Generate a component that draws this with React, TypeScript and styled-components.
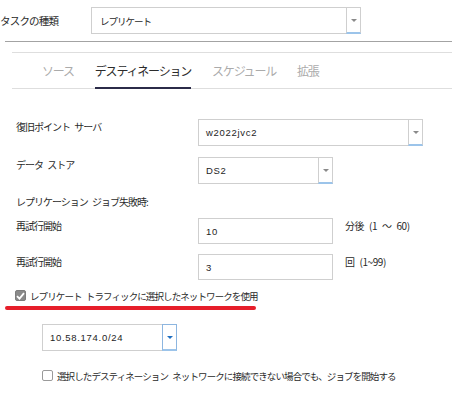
import styled, { createGlobalStyle } from 'styled-components'

const GlobalStyle = createGlobalStyle`
  body {
    margin: 0;
    background: #ffffff;
    overflow: hidden;
  }
`

const App = () => {
  return (
    <Page>
      <GlobalStyle />
      <TopRow>
        <TopLabel>タスクの種類</TopLabel>
        <Select $width={270}>
          <SelectValue>レプリケート</SelectValue>
          <ArrowBox>
            <Arrow />
          </ArrowBox>
        </Select>
      </TopRow>
      <Divider />
      <Tabs>
        <Tab>ソース</Tab>
        <Tab $active>デスティネーション</Tab>
        <Tab>スケジュール</Tab>
        <Tab>拡張</Tab>
      </Tabs>
      <Form>
        <Row>
          <Label>復旧ポイント サーバ</Label>
          <Select $width={225} $wide>
            <FieldText>w2022jvc2</FieldText>
            <ArrowBox>
              <Arrow />
            </ArrowBox>
          </Select>
        </Row>
        <Row $gap={11}>
          <Label>データ ストア</Label>
          <Select $width={135}>
            <FieldText>DS2</FieldText>
            <ArrowBox>
              <Arrow />
            </ArrowBox>
          </Select>
        </Row>
        <Heading>レプリケーション ジョブ失敗時:</Heading>
        <Row $gap={10}>
          <Label>再試行開始</Label>
          <Input>
            <FieldText>10</FieldText>
          </Input>
          <Unit>分後 (1 ～ 60)</Unit>
        </Row>
        <Row $gap={10}>
          <Label>再試行開始</Label>
          <Input>
            <FieldText>3</FieldText>
          </Input>
          <Unit>回 (1~99)</Unit>
        </Row>
      </Form>
      <CheckRow>
        <CheckBox $checked>
          <svg width="9" height="8" viewBox="0 0 9 8">
            <path d="M1 4.2 L3.5 6.6 L8 1.2" fill="none" stroke="#ffffff" strokeWidth="1.8" />
          </svg>
        </CheckBox>
        <CheckText>レプリケート トラフィックに選択したネットワークを使用</CheckText>
      </CheckRow>
      <Highlight />
      <NetworkRow>
        <Select $width={135}>
          <FieldText>10.58.174.0/24</FieldText>
          <ArrowBox $active>
            <Arrow $active />
          </ArrowBox>
        </Select>
      </NetworkRow>
      <CheckRow $indent={42} $gap={18}>
        <CheckBox />
        <CheckText>選択したデスティネーション ネットワークに接続できない場合でも、ジョブを開始する</CheckText>
      </CheckRow>
    </Page>
  )
}

export default App

const Page = styled.div`
  width: 452px;
  height: 393px;
  overflow: hidden;
  font-family: "Noto Sans CJK JP", "Liberation Sans", sans-serif;
  font-size: 10px;
  color: #2a2a2a;
  word-spacing: 3px;
  padding-top: 7px;
  box-sizing: border-box;
`

const TopRow = styled.div`
  display: flex;
  align-items: center;
  height: 27px;
`

const TopLabel = styled.div`
  width: 91px;
  letter-spacing: -0.8px;
  font-size: 10.5px;
`

const Select = styled.div<{ $width: number; $wide?: boolean }>`
  width: ${(p) => p.$width}px;
  height: 27px;
  box-sizing: border-box;
  border: 1px solid #cfcfcf;
  background: #ffffff;
  display: flex;
  align-items: stretch;
  ${(p) => (p.$wide ? 'grid-column: span 2;' : '')}
`

const SelectValue = styled.div`
  flex: 1;
  display: flex;
  align-items: center;
  padding-left: 8px;
  font-size: 9.5px;
  letter-spacing: -1px;
`

const FieldText = styled.div`
  flex: 1;
  display: flex;
  align-items: center;
  padding-left: 7px;
  font-family: "Liberation Sans", "Noto Sans CJK JP", sans-serif;
  font-size: 9.5px;
  letter-spacing: 0.7px;
  color: #1e1e1e;
`

const ArrowBox = styled.div<{ $active?: boolean }>`
  width: 15px;
  margin: -1px -1px -1px 0;
  box-sizing: border-box;
  border-left: 1px solid ${(p) => (p.$active ? '#8db6e0' : '#cfcfcf')};
  border-right: 1px solid ${(p) => (p.$active ? '#8db6e0' : 'transparent')};
  border-top: 1px solid ${(p) => (p.$active ? '#8db6e0' : 'transparent')};
  border-bottom: 2px solid #9cc4ea;
  display: flex;
  align-items: center;
  justify-content: center;
`

const Arrow = styled.div<{ $active?: boolean }>`
  width: 0;
  height: 0;
  border-left: 3.5px solid transparent;
  border-right: 3.5px solid transparent;
  border-top: 3.5px solid ${(p) => (p.$active ? '#1f6fc2' : '#8a8a8a')};
  margin-top: 1px;
`

const Divider = styled.div`
  height: 1px;
  margin: 7px 0 0 5px;
  background: #a3a3a3;
`

const Tabs = styled.div`
  margin: 10px 0 0 12px;
  height: 37px;
  box-sizing: border-box;
  border-top: 1px solid #dedede;
  border-bottom: 1px solid #dedede;
  display: flex;
  align-items: stretch;
  gap: 21px;
  padding-left: 30px;
`

const Tab = styled.div<{ $active?: boolean }>`
  display: flex;
  align-items: center;
  padding-top: 1px;
  font-size: 12px;
  letter-spacing: -1.2px;
  color: ${(p) => (p.$active ? '#2c2c2c' : '#ababab')};
  border-bottom: 2px solid ${(p) => (p.$active ? '#2b2b48' : 'transparent')};
  margin-bottom: -1px;
`

const Form = styled.div`
  padding: 30px 0 0 16px;
`

const Row = styled.div<{ $gap?: number }>`
  display: grid;
  grid-template-columns: 182px 147px 1fr;
  align-items: start;
  margin-top: ${(p) => p.$gap ?? 0}px;
`

const Label = styled.div`
  line-height: 13px;
  padding-top: 1px;
  letter-spacing: -1px;
`

const Heading = styled.div`
  margin-top: 12px;
  line-height: 12px;
  letter-spacing: -1px;
`

const Input = styled.div`
  width: 135px;
  height: 26px;
  box-sizing: border-box;
  border: 1px solid #cfcfcf;
  display: flex;
`

const Unit = styled.div`
  line-height: 13px;
  padding-top: 1px;
  letter-spacing: -0.4px;
`

const CheckRow = styled.div<{ $indent?: number; $gap?: number }>`
  display: flex;
  align-items: center;
  gap: 4px;
  height: 13px;
  margin: ${(p) => p.$gap ?? 9}px 0 0 ${(p) => p.$indent ?? 15}px;
`

const CheckBox = styled.span<{ $checked?: boolean }>`
  width: 11px;
  height: 11px;
  box-sizing: border-box;
  border-radius: 2px;
  border: 1px solid ${(p) => (p.$checked ? '#7d7d7d' : '#9a9a9a')};
  background: ${(p) => (p.$checked ? '#8a8a8a' : '#ffffff')};
  display: flex;
  align-items: center;
  justify-content: center;
`

const CheckText = styled.span`
  font-size: 9.5px;
  letter-spacing: -0.9px;
  white-space: nowrap;
`

const Highlight = styled.div`
  width: 251px;
  height: 4px;
  margin: 4px 0 0 5px;
  border-radius: 2px;
  background: #e61e2a;
`

const NetworkRow = styled.div`
  margin: 14px 0 0 42px;
`
